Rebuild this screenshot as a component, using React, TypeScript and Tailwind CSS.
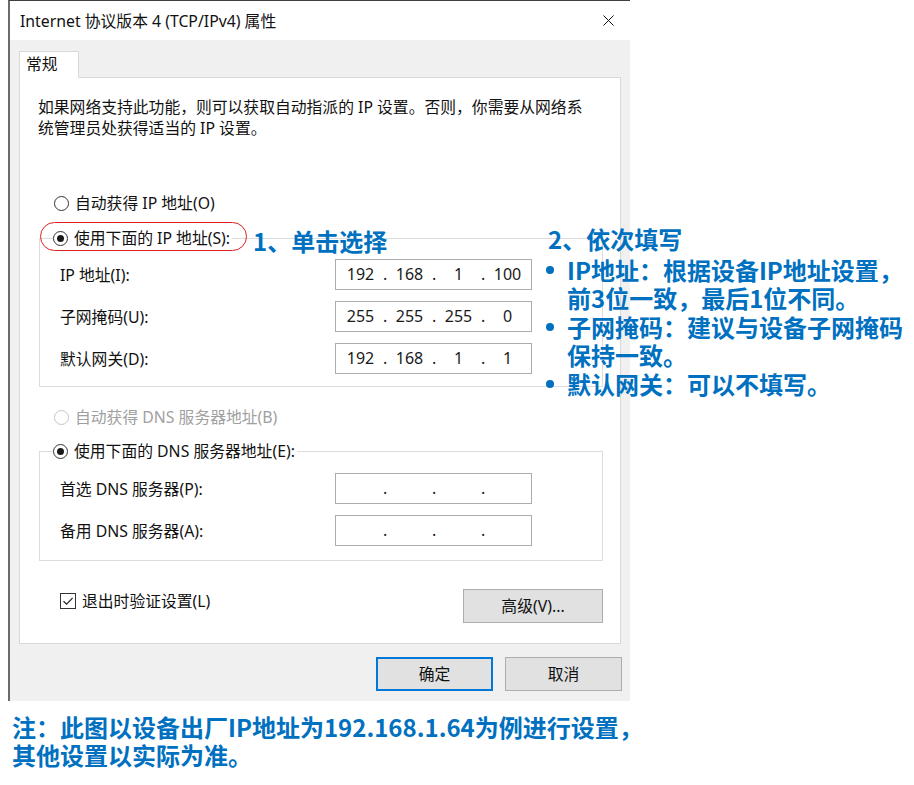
import React from "react";

const uiFont = "font-['Noto_Sans','Noto_Sans_CJK_SC',sans-serif]";
const noteFont = "font-['Noto_Sans_CJK_SC','Noto_Sans',sans-serif] font-bold text-[#0070c0]";

function Radio({ checked, disabled }: { checked?: boolean; disabled?: boolean }) {
  return (
    <span
      className={`flex h-[15px] w-[15px] shrink-0 items-center justify-center rounded-full border bg-white ${
        disabled ? "border-[#c6c6c6]" : "border-[#333333]"
      }`}
    >
      {checked && <span className="h-[7px] w-[7px] rounded-full bg-[#1a1a1a]" />}
    </span>
  );
}

function IpBox({ parts }: { parts: string[] }) {
  return (
    <div className="flex h-[31px] w-[197px] shrink-0 items-center border border-[#acacac] bg-white pb-[2px] pl-[2px] text-[16px] leading-[20px] text-[#1a1a1a]">
      {parts.map((p, i) => (
        <React.Fragment key={i}>
          {i > 0 && <span className="w-[4px] text-center">.</span>}
          <span className="w-[45px] text-center">{p}</span>
        </React.Fragment>
      ))}
    </div>
  );
}

function FieldRow({ label, parts }: { label: string; parts: string[] }) {
  return (
    <div className="flex h-[31px] items-center pl-[7px]">
      <span className="w-[275px] text-[15.8px] leading-[20px]">{label}</span>
      <IpBox parts={parts} />
    </div>
  );
}

function Button({ children, primary, className }: { children: React.ReactNode; primary?: boolean; className?: string }) {
  return (
    <div
      className={`flex h-[34px] items-center justify-center bg-[#e1e1e1] text-[15.8px] leading-[20px] ${
        primary ? "border-2 border-[#0078d7]" : "border border-[#adadad]"
      } ${className ?? ""}`}
    >
      {children}
    </div>
  );
}

export default function App() {
  return (
    <div className={`relative h-[785px] w-[914px] overflow-hidden bg-white text-[#111111] ${uiFont}`}>
      {/* dialog window */}
      <div className="ml-[8px] w-[622px] border-l-2 border-t border-l-[#6b6b6b] border-t-[#3f3f3f]">
        <div className="flex h-[39px] items-center justify-between bg-white pl-[10px] pr-[16px]">
          <span className="text-[15.8px] leading-[20px]">Internet 协议版本 4 (TCP/IPv4) 属性</span>
          <svg width="11" height="11" viewBox="0 0 11 11">
            <path d="M0.5 0.5L10.5 10.5M10.5 0.5L0.5 10.5" stroke="#111" strokeWidth="1" />
          </svg>
        </div>

        <div className="h-[661px] bg-[#f0f0f0] pl-[9px] pr-[8px] pt-[11px]">
          {/* tab header */}
          <div className="relative z-10 -mb-px h-[27px] w-[60px] border border-b-0 border-[#d9d9d9] bg-white pl-[6px] pt-[2px] text-[15.8px] leading-[20px]">
            常规
          </div>

          {/* tab page */}
          <div className="h-[567px] w-[602px] border border-[#d9d9d9] bg-white">
            <p className="pl-[18px] pt-[19px] text-[15.8px] leading-[21px]">
              如果网络支持此功能，则可以获取自动指派的 IP 设置。否则，你需要从网络系
              <br />
              统管理员处获得适当的 IP 设置。
            </p>

            <div className="mt-[54px] flex h-[20px] items-center gap-[6px] pl-[34px] text-[15.8px] leading-[20px]">
              <Radio />
              <span>自动获得 IP 地址(O)</span>
            </div>

            <fieldset className="ml-[19px] mr-[17px] mt-[15px] border border-[#dcdcdc] pb-[12px] pl-[13px] pt-[11px]">
              <legend className="relative flex h-[20px] items-center gap-[6px] pr-[2px] text-[15.8px] leading-[20px]">
                <span className="pointer-events-none absolute -top-[6px] left-[-13px] h-[29px] w-[207px] rounded-full border border-[#e02020]" />
                <Radio checked />
                <span>使用下面的 IP 地址(S):</span>
              </legend>
              <div className="flex flex-col gap-[11px]">
                <FieldRow label="IP 地址(I):" parts={["192", "168", "1", "100"]} />
                <FieldRow label="子网掩码(U):" parts={["255", "255", "255", "0"]} />
                <FieldRow label="默认网关(D):" parts={["192", "168", "1", "1"]} />
              </div>
            </fieldset>

            <div className="mt-[20px] flex h-[20px] items-center gap-[6px] pl-[34px] text-[15.8px] leading-[20px] text-[#a0a0a0]">
              <Radio disabled />
              <span>自动获得 DNS 服务器地址(B)</span>
            </div>

            <fieldset className="ml-[19px] mr-[17px] mt-[14px] border border-[#dcdcdc] pb-[14px] pl-[13px] pt-[12px]">
              <legend className="flex h-[20px] items-center gap-[6px] pr-[2px] text-[15.8px] leading-[20px]">
                <Radio checked />
                <span>使用下面的 DNS 服务器地址(E):</span>
              </legend>
              <div className="flex flex-col gap-[11px]">
                <FieldRow label="首选 DNS 服务器(P):" parts={["", "", "", ""]} />
                <FieldRow label="备用 DNS 服务器(A):" parts={["", "", "", ""]} />
              </div>
            </fieldset>

            <div className="mt-[28px] flex items-start justify-between pl-[40px] pr-[17px]">
              <div className="mt-[2px] flex items-center gap-[6px] text-[15.8px] leading-[20px]">
                <span className="flex h-[16px] w-[16px] items-center justify-center border border-[#333333] bg-white">
                  <svg width="12" height="12" viewBox="0 0 12 12">
                    <path d="M1.5 6.2L4.6 9.2L10.6 2.8" fill="none" stroke="#222" strokeWidth="1.2" />
                  </svg>
                </span>
                <span>退出时验证设置(L)</span>
              </div>
              <Button className="w-[140px]">高级(V)...</Button>
            </div>
          </div>

          {/* dialog buttons */}
          <div className="mt-[13px] flex justify-end gap-[12px]">
            <Button primary className="w-[117px]">确定</Button>
            <Button className="w-[117px]">取消</Button>
          </div>
        </div>
      </div>

      {/* callouts */}
      <div className={`absolute left-[253px] top-[227px] whitespace-nowrap text-[24px] leading-[28px] ${noteFont}`}>
        1、单击选择
      </div>

      <div className={`absolute left-[546px] top-[225px] whitespace-nowrap text-[24px] leading-[28.5px] ${noteFont}`}>
        <div className="pl-[2px]">2、依次填写</div>
        <div className="mt-[2px] flex flex-col">
          {[
            ["IP地址：根据设备IP地址设置，", "前3位一致，最后1位不同。"],
            ["子网掩码：建议与设备子网掩码", "保持一致。"],
            ["默认网关：可以不填写。"],
          ].map((lines, i) => (
            <div key={i} className="flex">
              <span className="flex h-[28.5px] w-[21px] shrink-0 items-center">
                <span className="h-[8px] w-[8px] rounded-full bg-[#0070c0]" />
              </span>
              <div>
                {lines.map((l) => (
                  <div key={l}>{l}</div>
                ))}
              </div>
            </div>
          ))}
        </div>
      </div>

      <div className={`mt-[12px] pl-[12px] text-[24px] leading-[28px] ${noteFont}`}>
        <div>注：此图以设备出厂IP地址为192.168.1.64为例进行设置，</div>
        <div>其他设置以实际为准。</div>
      </div>
    </div>
  );
}
